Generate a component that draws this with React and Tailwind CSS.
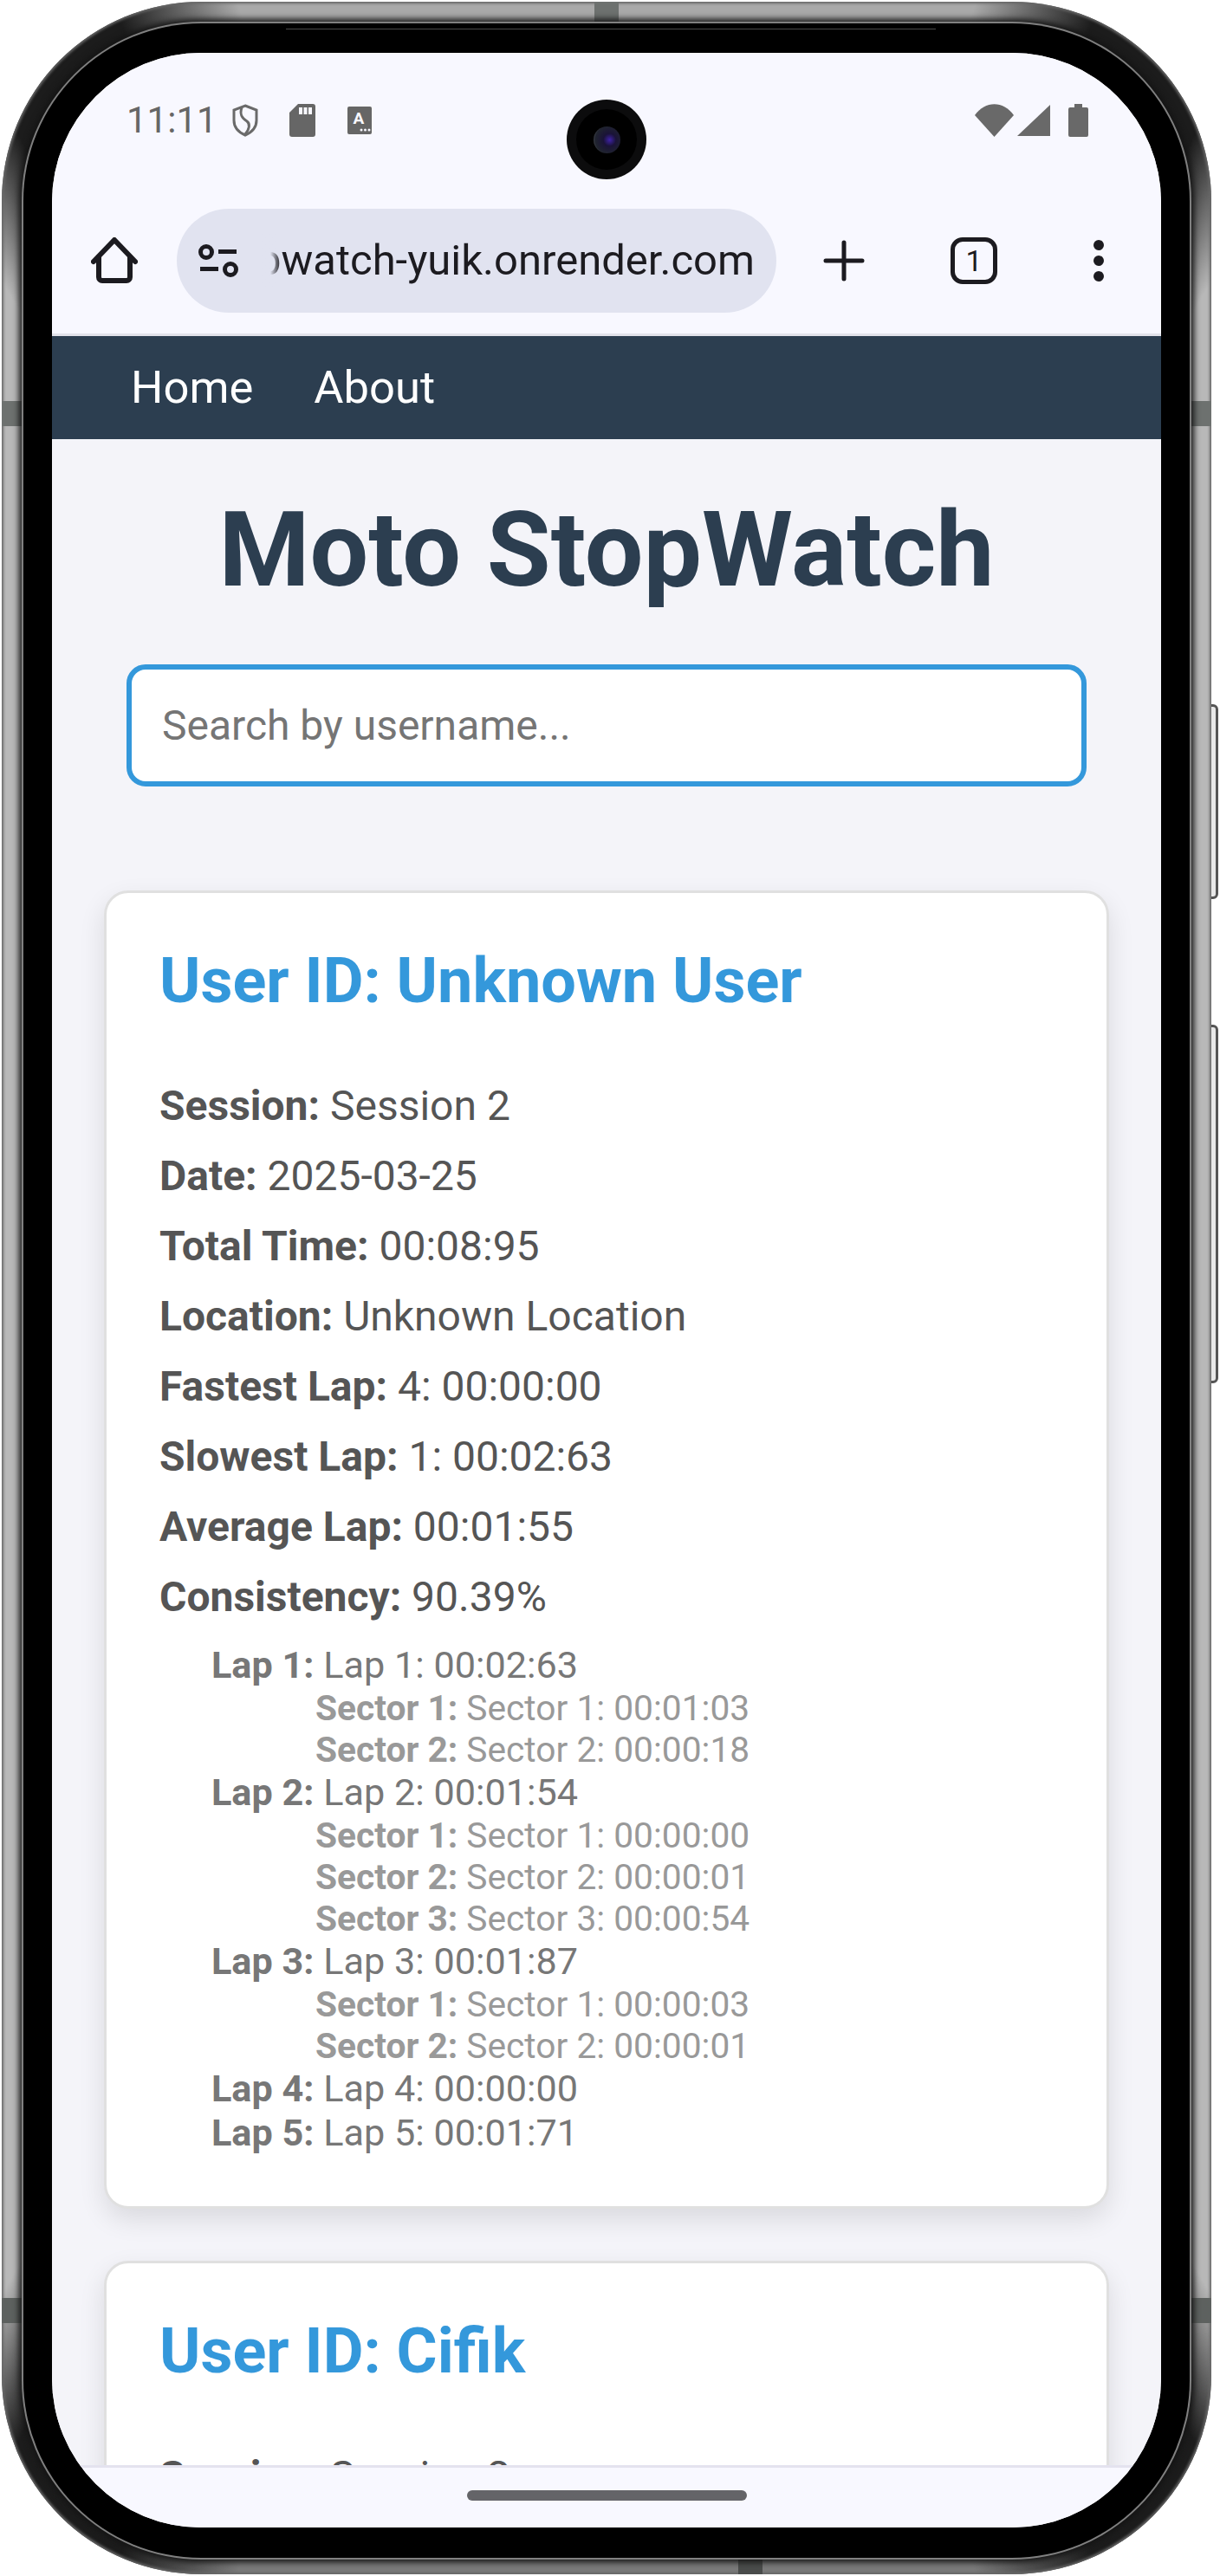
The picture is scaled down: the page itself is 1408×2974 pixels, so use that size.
import React from "react";

const details = [
  ["Session:", "Session 2"],
  ["Date:", "2025-03-25"],
  ["Total Time:", "00:08:95"],
  ["Location:", "Unknown Location"],
  ["Fastest Lap:", "4: 00:00:00"],
  ["Slowest Lap:", "1: 00:02:63"],
  ["Average Lap:", "00:01:55"],
  ["Consistency:", "90.39%"],
];

const laps = [
  { n: 1, time: "00:02:63", sectors: ["00:01:03", "00:00:18"] },
  { n: 2, time: "00:01:54", sectors: ["00:00:00", "00:00:01", "00:00:54"] },
  { n: 3, time: "00:01:87", sectors: ["00:00:03", "00:00:01"] },
  { n: 4, time: "00:00:00", sectors: [] },
  { n: 5, time: "00:01:71", sectors: [] },
];

function StatusBar() {
  return (
    <div className="relative flex h-[39px] mt-[58px] pl-[86px] pr-[84px] items-center justify-between">
      <div className="flex items-center">
        <span className="w-[122px] text-[42px] leading-[39px] text-[#666]">11:11</span>
        <svg width="30" height="38" viewBox="0 0 30 38" fill="none" stroke="#6a6a6a" strokeWidth="3">
          <path d="M15 2 L28 7 V19 C28 28 22 33 15 36 C8 33 2 28 2 19 V7 Z" />
          <path d="M11 4 C8 13 12 17 17 20 C21 23 20 29 15 35" />
        </svg>
        <svg className="ml-[36px]" width="30" height="38" viewBox="0 0 30 38">
          <path d="M10 0 H27 a3 3 0 0 1 3 3 V35 a3 3 0 0 1-3 3 H3 a3 3 0 0 1-3-3 V10 Z" fill="#666" />
          <path d="M11 4 h4 v8 h-4 z M16.5 4 h4 v8 h-4 z M22 4 h4 v8 h-4 z" fill="#f8f8ff" />
        </svg>
        <svg className="ml-[37px]" width="28" height="32" viewBox="0 0 28 32">
          <rect width="28" height="32" rx="2" fill="#666" />
          <text x="13" y="20" fontSize="19" fontWeight="700" textAnchor="middle" fill="#f8f8ff">A</text>
          <circle cx="16" cy="27" r="1.5" fill="#f8f8ff" />
          <circle cx="20.5" cy="27" r="1.5" fill="#f8f8ff" />
          <circle cx="25" cy="27" r="1.5" fill="#f8f8ff" />
        </svg>
      </div>

      {/* punch hole camera */}
      <div className="absolute left-[594px] top-[-4px] w-[92px] h-[92px] rounded-full bg-[#0c0c0d] flex items-center justify-center">
        <div className="w-[70px] h-[70px] rounded-full bg-black flex items-center justify-center">
          <div className="w-[31px] h-[31px] rounded-full bg-[radial-gradient(circle_at_60%_50%,#3f22a8_0%,#1a1338_30%,#20242f_68%,#77787a_100%)]" />
        </div>
      </div>

      <div className="flex items-end">
        <svg width="45" height="38" viewBox="0 0 45 38">
          <path d="M0 13 C12 -4 33 -4 45 13 L22.5 38 Z" fill="#696969" />
        </svg>
        <svg className="ml-[4px]" width="38" height="38" viewBox="0 0 38 38">
          <path d="M38 1 V37 H0 Z" fill="#696969" />
        </svg>
        <svg className="ml-[21px]" width="23" height="38" viewBox="0 0 23 38">
          <path d="M7 0 h9 v4 h5 a2 2 0 0 1 2 2 V36 a2 2 0 0 1-2 2 H2 a2 2 0 0 1-2-2 V6 a2 2 0 0 1 2-2 h5 Z" fill="#696969" />
        </svg>
      </div>
    </div>
  );
}

function Toolbar() {
  return (
    <div className="flex items-center mt-[83px] pl-[45px]">
      <svg width="54" height="54" viewBox="0 0 54 54" fill="none" stroke="#1c1b20" strokeWidth="6" strokeLinecap="round" strokeLinejoin="round">
        <path d="M3 28 L27 3 L51 28" />
        <path d="M9 23 V46 a4 4 0 0 0 4 4 H41 a4 4 0 0 0 4-4 V23" />
      </svg>

      <div className="ml-[45px] w-[692px] h-[120px] rounded-[60px] bg-[#e1e3f0] flex items-center pl-[25px]">
        <svg width="46" height="38" viewBox="0 0 46 38" fill="none" stroke="#1c1b20" strokeWidth="5">
          <circle cx="9" cy="9" r="6.5" />
          <circle cx="37" cy="29" r="6.5" />
          <path d="M23 8.5 H44 M2 28.5 H23" />
        </svg>
        <div className="relative ml-[25px] w-[571px] overflow-hidden flex justify-end">
          <span className="whitespace-nowrap text-[49px] leading-[66px] text-[#1c1b20]">stopwatch-yuik.onrender.com</span>
          <div className="absolute left-0 top-0 w-[24px] h-full bg-gradient-to-r from-[#e1e3f0] from-50% to-transparent" />
        </div>
      </div>

      <svg className="ml-[54px]" width="48" height="48" viewBox="0 0 48 48" stroke="#1c1b20" strokeWidth="5" strokeLinecap="round">
        <path d="M24 3 V45 M3 24 H45" />
      </svg>

      <div className="ml-[99px] w-[54px] h-[54px] rounded-[14px] border-[5px] border-[#1c1b20] flex items-center justify-center text-[34px] leading-none text-[#1c1b20]">
        1
      </div>

      <div className="ml-[111px] flex flex-col gap-[6px]">
        <div className="w-[12px] h-[12px] rounded-full bg-[#1c1b20]" />
        <div className="w-[12px] h-[12px] rounded-full bg-[#1c1b20]" />
        <div className="w-[12px] h-[12px] rounded-full bg-[#1c1b20]" />
      </div>
    </div>
  );
}

function SessionCard({ title, rows, lapRows, className }) {
  return (
    <div className={`mx-[60px] rounded-[28px] border-[3px] border-[#e0e0e0] bg-white px-[61px] pt-[60px] pb-[59px] shadow-[0_12px_30px_rgba(0,0,0,0.11)] ${className}`}>
      <h2 className="text-[72px] leading-[84px] font-bold text-[#3498db] mb-[72px]">{title}</h2>
      {rows.map(([label, value]) => (
        <p key={label} className="text-[48px] leading-[59px] mb-[22px] text-[#555]">
          <strong className="font-bold">{label}</strong> {value}
        </p>
      ))}
      {lapRows.length > 0 && (
        <ul className="pl-[60px] mt-[24px]">
          {lapRows.map((lap) => (
            <li key={lap.n}>
              <div className="text-[43.2px] leading-[51px] text-[#777]">
                <strong className="font-bold">Lap {lap.n}:</strong> Lap {lap.n}: {lap.time}
              </div>
              {lap.sectors.map((time, i) => (
                <div key={i} className="pl-[120px] text-[40.7px] leading-[48px] text-[#999]">
                  <strong className="font-bold">Sector {i + 1}:</strong> Sector {i + 1}: {time}
                </div>
              ))}
            </li>
          ))}
        </ul>
      )}
    </div>
  );
}

function Page() {
  return (
    <div className="flex-1 min-h-0 overflow-hidden bg-[#f4f4f9]">
      <nav className="h-[119px] bg-[#2c3e50] flex items-center pl-[91px] gap-[70px] text-[52.5px] text-white">
        <span>Home</span>
        <span>About</span>
      </nav>
      <h1 className="mt-[57px] mb-[60px] text-center text-[120px] leading-[143px] font-bold text-[#2c3e50]">Moto StopWatch</h1>
      <input
        readOnly
        placeholder="Search by username..."
        className="block mx-[86px] w-[1108px] h-[141px] rounded-[22px] border-[6px] border-[#3498db] bg-white pl-[35px] text-[48px] outline-none placeholder:text-[#757575]"
      />
      <SessionCard className="mt-[120px]" title="User ID: Unknown User" rows={details} lapRows={laps} />
      <SessionCard className="mt-[60px]" title="User ID: Cifik" rows={details.slice(0, 1)} lapRows={[]} />
    </div>
  );
}

export default function App() {
  return (
    <div className="relative w-[1408px] h-[2974px] bg-white overflow-hidden pt-[2px] pl-[2px] font-['Roboto',sans-serif]">
      {/* side buttons */}
      <div className="absolute left-[1394px] top-[813px] w-[12px] h-[225px] rounded-r-[6px] border-[3px] border-[#555] bg-[#e8e8e8]" />
      <div className="absolute left-[1394px] top-[1183px] w-[12px] h-[414px] rounded-r-[6px] border-[3px] border-[#555] bg-[#e8e8e8]" />

      {/* phone body */}
      <div className="relative w-[1396px] h-[2970px] rounded-[230px] pt-[25px] px-[25px] pb-[19px] bg-[conic-gradient(#a9a9a9_0deg_16deg,#1c1c1c_21deg_27deg,#b8b8b8_31deg_149deg,#1c1c1c_153deg_159deg,#7a7a7a_164deg_196deg,#1c1c1c_201deg_207deg,#b8b8b8_211deg_329deg,#1c1c1c_333deg_339deg,#a9a9a9_344deg_360deg)] shadow-[inset_0_0_3px_2px_#666]">
        {/* band seams */}
        <div className="absolute left-[684px] top-0 w-[28px] h-[23px] bg-[#6d716f]" />
        <div className="absolute left-[850px] bottom-0 w-[28px] h-[19px] bg-[#4a4c4b]" />
        <div className="absolute left-0 top-[461px] w-[25px] h-[29px] bg-[#6d716f]" />
        <div className="absolute right-0 top-[461px] w-[25px] h-[29px] bg-[#6d716f]" />
        <div className="absolute left-0 top-[2651px] w-[25px] h-[29px] bg-[#5d615f]" />
        <div className="absolute right-0 top-[2651px] w-[25px] h-[29px] bg-[#5d615f]" />

        {/* bezel */}
        <div className="relative w-full h-full rounded-[205px] bg-black pt-[34px] px-[33px] pb-[35px] shadow-[0_0_0_2px_#808080,0_0_7px_5px_#141414]">
          <div className="absolute left-[303px] top-[6px] w-[750px] h-px bg-[#4a4a4a]" />

          {/* screen */}
          <div className="w-[1280px] h-[2857px] rounded-[172px] overflow-hidden flex flex-col bg-[#f8f8ff]">
            <div className="bg-[#f8f8ff] border-b-[3px] border-[#e2e2ea] pb-[24px]">
              <StatusBar />
              <Toolbar />
            </div>
            <Page />
            <div className="h-[72px] shrink-0 bg-[#f8f8ff] border-t-[3px] border-[#e4e3ef] pt-[26px] flex justify-center">
              <div className="w-[323px] h-[12px] rounded-full bg-[#646468]" />
            </div>
          </div>
        </div>
      </div>
    </div>
  );
}
